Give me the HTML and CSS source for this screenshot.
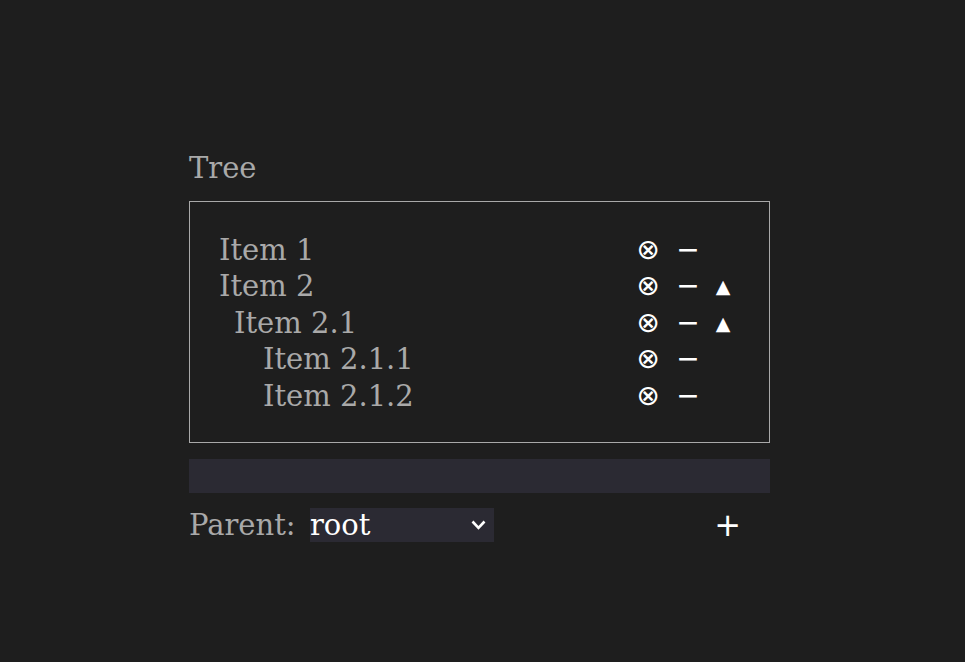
FILE: index.html
```html
<!DOCTYPE html>
<html>
<head>
<meta charset="utf-8">
<link rel="stylesheet" href="styles.css">
</head>
<body>
<main class="app">
  <h1 class="title">Tree</h1>
  <ul class="tree">
    <li class="row"><span class="name lvl0">Item 1</span><span class="actions"><span class="btn del">⊗</span><span class="btn min">−</span><span class="btn up"></span></span></li>
    <li class="row"><span class="name lvl0">Item 2</span><span class="actions"><span class="btn del">⊗</span><span class="btn min">−</span><span class="btn up">▲</span></span></li>
    <li class="row"><span class="name lvl1">Item 2.1</span><span class="actions"><span class="btn del">⊗</span><span class="btn min">−</span><span class="btn up">▲</span></span></li>
    <li class="row"><span class="name lvl2">Item 2.1.1</span><span class="actions"><span class="btn del">⊗</span><span class="btn min">−</span><span class="btn up"></span></span></li>
    <li class="row"><span class="name lvl2">Item 2.1.2</span><span class="actions"><span class="btn del">⊗</span><span class="btn min">−</span><span class="btn up"></span></span></li>
  </ul>
  <div class="input"></div>
  <div class="controls">
    <span class="label">Parent:</span>
    <span class="select">root<svg class="chev" width="15" height="10" viewBox="0 0 15 10"><path d="M1.5 1.5 L7.5 7.8 L13.5 1.5" fill="none" stroke="#fff" stroke-width="2.6"/></svg></span>
    <span class="plus">+</span>
  </div>
</main>
</body>
</html>
```
FILE: styles.css
```css
html, body {
  margin: 0;
  padding: 0;
  background: #1e1e1e;
}
body {
  font-family: "DejaVu Serif", serif;
  color: #a9a9a9;
}
.app {
  width: 581px;
  margin: 0 0 0 189px;
  padding-top: 148px;
}
.title {
  font-size: 29px;
  font-weight: normal;
  margin: 0 0 13px 0;
  line-height: 40px;
}
.tree {
  list-style: none;
  margin: 0;
  border: 1px solid #a9a9a9;
  padding: 30px 31px 28px 29px;
  font-size: 29px;
  line-height: 36.4px;
}
.row {
  display: flex;
  align-items: center;
  height: 36.4px;
}
.name { flex: 1; }
.lvl1 { padding-left: 15px; }
.lvl2 { padding-left: 44px; }
.actions {
  display: flex;
  font-family: "DejaVu Sans", sans-serif;
  color: #fff;
}
.btn {
  display: flex;
  justify-content: center;
  align-items: center;
  height: 36px;
}
.del { width: 40px; font-size: 28px; }
.min { width: 40px; font-size: 28px; }
.up { width: 30px; font-size: 19px; }
.input {
  height: 34px;
  background: #2b2a33;
  margin-top: 16px;
}
.controls {
  display: flex;
  align-items: center;
  margin-top: 15px;
  height: 34px;
  font-size: 29px;
}
.label { width: 121px; }
.select {
  display: flex;
  align-items: center;
  justify-content: space-between;
  width: 184px;
  height: 34px;
  background: #2b2a33;
  color: #fff;
  padding-right: 8px;
  box-sizing: border-box;
}
.plus {
  margin-left: auto;
  margin-right: 29px;
  color: #fff;
  font-family: "DejaVu Sans", sans-serif;
  font-size: 32px;
}
```
